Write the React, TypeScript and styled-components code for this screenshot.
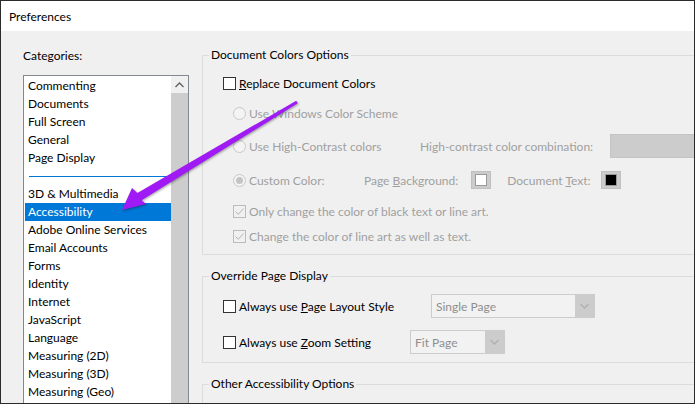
import React from 'react'
import styled, { createGlobalStyle } from 'styled-components'

const GlobalStyle = createGlobalStyle`
  body {
    margin: 0;
    background: #ffffff;
    font-family: Lato, 'Noto Sans', sans-serif;
    font-size: 12px;
  }
`

const categoriesTop = ['Commenting', 'Documents', 'Full Screen', 'General', 'Page Display']
const categoriesBottom = [
  '3D & Multimedia',
  'Accessibility',
  'Adobe Online Services',
  'Email Accounts',
  'Forms',
  'Identity',
  'Internet',
  'JavaScript',
  'Language',
  'Measuring (2D)',
  'Measuring (3D)',
  'Measuring (Geo)',
]

const Check = ({ color }: { color: string }) => (
  <svg width="11" height="11" viewBox="0 0 11 11">
    <path d="M1.5 5.5 L4.3 8.3 L9.5 2.5" fill="none" stroke={color} strokeWidth="1" />
  </svg>
)

const Chevron = ({ up, color }: { up?: boolean; color: string }) => (
  <svg width="9" height="6" viewBox="0 0 9 6">
    <path d={up ? 'M0.5 5 L4.5 1 L8.5 5' : 'M0.5 1 L4.5 5 L8.5 1'} fill="none" stroke={color} strokeWidth="1.3" />
  </svg>
)

const App: React.FC = () => {
  return (
    <>
      <GlobalStyle />
      <Window>
        <TitleBar>Preferences</TitleBar>
        <Body>
          <LeftColumn>
            <FieldLabel>Categories:</FieldLabel>
            <ListBox>
              <Items>
                {categoriesTop.map((name) => (
                  <Item key={name}>{name}</Item>
                ))}
                <Separator />
                {categoriesBottom.map((name) => (
                  <Item key={name} $selected={name === 'Accessibility'}>
                    {name}
                  </Item>
                ))}
              </Items>
              <ScrollBar>
                <ScrollButton>
                  <Chevron up color="#606060" />
                </ScrollButton>
                <ScrollThumb />
              </ScrollBar>
            </ListBox>
          </LeftColumn>

          <RightColumn>
            <GroupBox>
              <Legend>Document Colors Options</Legend>
              <Row $top={8}>
                <CheckBox />
                <OptionText>
                  <U>R</U>eplace Document Colors
                </OptionText>
              </Row>
              <Row $top={6} $indent={30}>
                <Radio />
                <OptionText $disabled>Use Windows Color Scheme</OptionText>
              </Row>
              <Row $top={9} $indent={30}>
                <RadioOption $w={184}>
                  <Radio />
                  <OptionText $disabled>Use High-Contrast colors</OptionText>
                </RadioOption>
                <OptionText $disabled>
                  Hi<U>g</U>h-contrast color combination:
                </OptionText>
                <WideSelect />
              </Row>
              <Row $top={10} $indent={30}>
                <RadioOption $w={128}>
                  <Radio $checked />
                  <OptionText $disabled>Custom Color:</OptionText>
                </RadioOption>
                <OptionText $disabled>
                  Page <U>B</U>ackground:
                </OptionText>
                <Swatch $gap={13}>
                  <SwatchInner $color="#ffffff" />
                </Swatch>
                <OptionText $disabled>
                  Document <U>T</U>ext:
                </OptionText>
                <Swatch $gap={10}>
                  <SwatchInner $color="#000000" />
                </Swatch>
              </Row>
              <Row $top={7} $indent={30}>
                <CheckBox $disabled>
                  <Check color="#b4b4b4" />
                </CheckBox>
                <OptionText $disabled>Only change the color of black text or line art.</OptionText>
              </Row>
              <Row $top={1} $indent={30}>
                <CheckBox $disabled>
                  <Check color="#b4b4b4" />
                </CheckBox>
                <OptionText $disabled>Change the color of line art as well as text.</OptionText>
              </Row>
              <GroupEnd $h={6} />
            </GroupBox>

            <GroupBox>
              <Legend>Override Page Display</Legend>
              <Row $top={10}>
                <CheckBox />
                <OptionText $w={192}>
                  Always use <U>P</U>age Layout Style
                </OptionText>
                <Select $w={164}>
                  <SelectValue>Single Page</SelectValue>
                  <SelectArrow>
                    <Chevron color="#b0b0b0" />
                  </SelectArrow>
                </Select>
              </Row>
              <Row $top={12}>
                <CheckBox />
                <OptionText $w={171}>
                  Always use <U>Z</U>oom Setting
                </OptionText>
                <Select $w={95}>
                  <SelectValue>Fit Page</SelectValue>
                  <SelectArrow>
                    <Chevron color="#b0b0b0" />
                  </SelectArrow>
                </Select>
              </Row>
              <GroupEnd $h={8} />
            </GroupBox>

            <GroupBox>
              <Legend>Other Accessibility Options</Legend>
              <GroupEnd $h={40} />
            </GroupBox>
          </RightColumn>
        </Body>

        <ArrowOverlay width="693" height="402" viewBox="0 0 693 402">
          <polygon
            points="121,209 131,187 136.4,192.1 295.2,99.7 296.8,102.3 140.6,199.2 145,203"
            fill="#a01af5"
          />
        </ArrowOverlay>
      </Window>
    </>
  )
}

const Window = styled.div`
  position: relative;
  width: 695px;
  height: 404px;
  box-sizing: border-box;
  border: 1px solid #2b2b2b;
  background: #f0f0f0;
  display: flex;
  flex-direction: column;
  overflow: hidden;
`

const TitleBar = styled.div`
  height: 30px;
  flex-shrink: 0;
  background: #ffffff;
  display: flex;
  align-items: center;
  padding-left: 8px;
  color: #000000;
  font-size: 12px;
`

const Body = styled.div`
  flex: 1;
  display: flex;
  gap: 13px;
  padding-left: 22px;
  min-height: 0;
  overflow: hidden;
`

const LeftColumn = styled.div`
  width: 166px;
  flex-shrink: 0;
  display: flex;
  flex-direction: column;
`

const FieldLabel = styled.div`
  margin-top: 17px;
  line-height: 16px;
  color: #000000;
`

const ListBox = styled.div`
  margin-top: 11px;
  flex: 1;
  display: flex;
  border: 1px solid #828790;
  border-bottom: none;
  background: #ffffff;
  min-height: 0;
`

const Items = styled.div`
  width: 147px;
  padding-top: 1px;
  display: flex;
  flex-direction: column;
`

const Item = styled.div<{ $selected?: boolean }>`
  height: 18px;
  line-height: 18px;
  margin-left: 1px;
  padding-left: 3px;
  white-space: nowrap;
  color: ${(p) => (p.$selected ? '#ffffff' : '#000000')};
  background: ${(p) => (p.$selected ? '#0078d7' : 'transparent')};
`

const Separator = styled.div`
  height: 18px;
  display: flex;
  align-items: center;
  padding: 0 2px 0 5px;

  &::after {
    content: '';
    flex: 1;
    height: 1px;
    background: #0078d7;
  }
`

const ScrollBar = styled.div`
  width: 17px;
  display: flex;
  flex-direction: column;
  background: #f0f0f0;
`

const ScrollButton = styled.div`
  height: 17px;
  display: flex;
  align-items: center;
  justify-content: center;
`

const ScrollThumb = styled.div`
  flex: 1;
  background: #cdcdcd;
`

const RightColumn = styled.div`
  width: 540px;
  flex-shrink: 0;
  padding-top: 24px;
  display: flex;
  flex-direction: column;
  gap: 21px;
`

const GroupBox = styled.div`
  border: 1px solid #dcdcdc;
  display: flex;
  flex-direction: column;
`

const Legend = styled.div`
  align-self: flex-start;
  margin: -9px 0 0 6px;
  padding: 0 2px;
  line-height: 16px;
  background: #f0f0f0;
  color: #000000;
`

const GroupEnd = styled.div<{ $h: number }>`
  height: ${(p) => p.$h}px;
`

const Row = styled.div<{ $top: number; $indent?: number }>`
  height: 24px;
  margin-top: ${(p) => p.$top}px;
  padding-left: ${(p) => p.$indent ?? 20}px;
  display: flex;
  align-items: center;
  white-space: nowrap;
`

const RadioOption = styled.div<{ $w: number }>`
  width: ${(p) => p.$w}px;
  display: flex;
  align-items: center;
`

const OptionText = styled.span<{ $disabled?: boolean; $w?: number }>`
  margin-left: 3px;
  color: ${(p) => (p.$disabled ? '#a0a0a0' : '#000000')};
  ${(p) => (p.$w ? `width: ${p.$w}px;` : '')}
`

const U = styled.span`
  text-decoration: underline;
`

const CheckBox = styled.div<{ $disabled?: boolean }>`
  width: 13px;
  height: 13px;
  box-sizing: border-box;
  flex-shrink: 0;
  border: 1px solid ${(p) => (p.$disabled ? '#bcbcbc' : '#333333')};
  background: ${(p) => (p.$disabled ? '#f0f0f0' : '#ffffff')};
  display: flex;
  align-items: center;
  justify-content: center;
`

const Radio = styled.div<{ $checked?: boolean }>`
  width: 13px;
  height: 13px;
  box-sizing: border-box;
  flex-shrink: 0;
  border-radius: 50%;
  border: 1px solid #c8c8c8;
  background: #f4f4f4;
  display: flex;
  align-items: center;
  justify-content: center;

  &::after {
    content: '';
    display: ${(p) => (p.$checked ? 'block' : 'none')};
    width: 7px;
    height: 7px;
    border-radius: 50%;
    background: #c4c4c4;
  }
`

const WideSelect = styled.div`
  margin-left: 17px;
  width: 120px;
  height: 24px;
  flex-shrink: 0;
  box-sizing: border-box;
  border: 1px solid #c4c4c4;
  background: #cccccc;
`

const Swatch = styled.div<{ $gap: number }>`
  margin: 0 13px 0 ${(p) => p.$gap}px;
  width: 20px;
  height: 18px;
  box-sizing: border-box;
  background: #cccccc;
  border: 1px solid #c0c0c0;
  display: flex;
  align-items: center;
  justify-content: center;
`

const SwatchInner = styled.div<{ $color: string }>`
  width: 12px;
  height: 12px;
  box-sizing: border-box;
  border: 1px solid #9a9a9a;
  background: ${(p) => p.$color};
`

const Select = styled.div<{ $w: number }>`
  width: ${(p) => p.$w}px;
  height: 24px;
  box-sizing: border-box;
  border: 1px solid #cccccc;
  background: #cccccc;
  display: flex;
`

const SelectValue = styled.div`
  flex: 1;
  background: #f2f2f2;
  color: #8e8e8e;
  padding-left: 4px;
  display: flex;
  align-items: center;
`

const SelectArrow = styled.div`
  width: 19px;
  display: flex;
  align-items: center;
  justify-content: center;
`

const ArrowOverlay = styled.svg`
  position: absolute;
  left: 0;
  top: 0;
  pointer-events: none;
  filter: drop-shadow(1px 1px 1px rgba(0, 0, 0, 0.35));
`

export default App
